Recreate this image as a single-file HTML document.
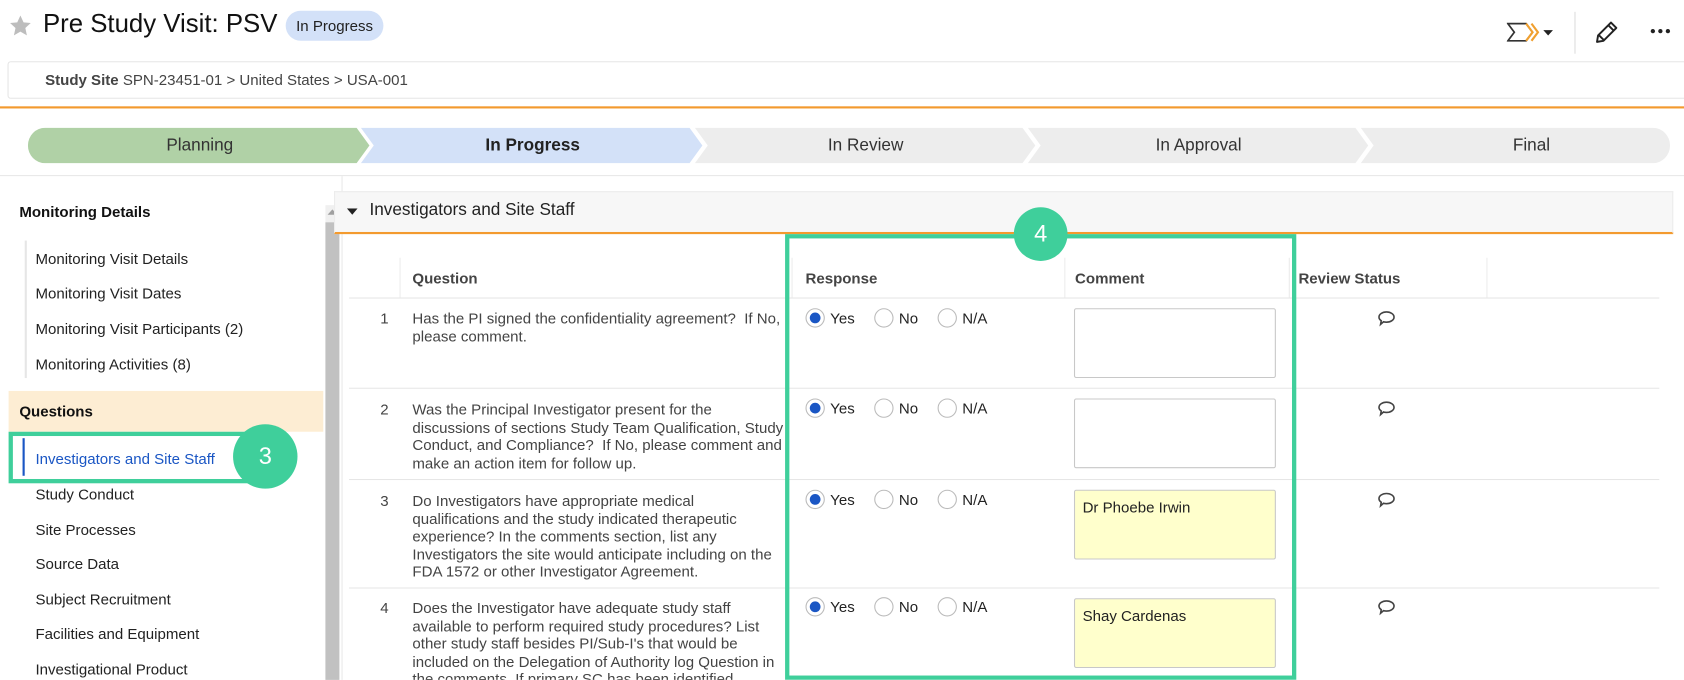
<!DOCTYPE html>
<html><head><meta charset="utf-8"><style>
*{box-sizing:border-box;margin:0;padding:0}
html,body{width:1684px;height:680px;overflow:hidden;background:#fff}
body{font-family:"Liberation Sans",Arial,sans-serif;color:#222;position:relative}
#w{position:absolute;left:0;top:0;width:1568px;height:633px;overflow:hidden;transform:scale(1.07398);transform-origin:0 0}
.a{position:absolute}
.nav{font-size:14px;color:#222}
.q{font-size:14px;color:#444;line-height:16.5px;white-space:nowrap}
.hd{font-size:14px;font-weight:bold;color:#444}
.rad{position:absolute;width:18px;height:18px;border:1px solid #bbb;border-radius:50%;background:#fff}
.rad.on::after{content:"";position:absolute;left:3px;top:3px;width:10px;height:10px;border-radius:50%;background:#1a56c4}
.rl{position:absolute;font-size:14px;color:#222}
.ta{position:absolute;left:1000px;width:188px;height:65px;border:1px solid #c8c8c8;border-radius:2px;font-size:14px;padding:7px 7px}
.row{position:absolute;left:325px;width:1220px;height:1px;background:#e6e6e6}
</style></head><body><div id="w">
<svg class="a" style="left:8px;top:13px" width="22" height="22" viewBox="0 0 24 24"><path d="M12 1.5l3.2 7 7.3.7-5.5 5 1.6 7.5L12 17.9 5.4 21.7 7 14.2 1.5 9.2l7.3-.7z" fill="#bdbdbd"/></svg>
<div class="a" style="left:40px;top:9px;font-size:24px;color:#111">Pre Study Visit: PSV</div>
<div class="a" style="left:266px;top:10px;width:91px;height:28px;border-radius:14px;background:#d3e1f8;font-size:14px;line-height:28px;text-align:center;color:#222">In Progress</div>
<svg class="a" style="left:1403px;top:20px" width="48" height="20" viewBox="0 0 48 20"><path d="M1 2h17l6 8-6 8H1l6-8z" fill="none" stroke="#333" stroke-width="1.6"/><path d="M18 2l6 8-6 8M23 2l6 8-6 8" fill="none" stroke="#f0a030" stroke-width="2"/><path d="M34 8h9l-4.5 5z" fill="#222"/></svg>
<div class="a" style="left:1466px;top:11px;width:1px;height:39px;background:#ddd"></div>
<svg class="a" style="left:1484px;top:18px" width="24" height="24" viewBox="0 0 24 24"><path d="M16 3l5 5L9 20l-6 1 1-6z M13.5 5.5l5 5 M5 15l4 4" fill="none" stroke="#222" stroke-width="1.8" stroke-linejoin="round"/></svg>
<svg class="a" style="left:1536px;top:26px" width="20" height="6"><circle cx="3" cy="3" r="2" fill="#222"/><circle cx="10" cy="3" r="2" fill="#222"/><circle cx="17" cy="3" r="2" fill="#222"/></svg>
<div class="a" style="left:7px;top:57px;width:1580px;height:35px;border:1px solid #e6e6e6;border-radius:3px"></div>
<div class="a" style="left:42px;top:66px;font-size:14px;color:#444"><b>Study Site</b> SPN-23451-01 &gt; United States &gt; USA-001</div>
<div class="a" style="left:0;top:99px;width:1684px;height:2px;background:#f39a2e"></div>
<svg class="a" style="left:26px;top:119px" width="1530" height="33" viewBox="0 0 1530 33">
<path d="M16 0H306l12 16.5L306 33H16A16 16.5 0 0 1 16 0z" fill="#b0d1a6"/>
<path d="M310 0H616l12 16.5L616 33H310l12-16.5z" fill="#d3e1f8"/>
<path d="M621 0H926l12 16.5L926 33H621l12-16.5z" fill="#ededed"/>
<path d="M931 0H1236l12 16.5L1236 33H931l12-16.5z" fill="#ededed"/>
<path d="M1241 0H1513a16 16.5 0 0 1 0 33H1241l12-16.5z" fill="#ededed"/>
</svg>
<div class="a" style="left:26px;top:127px;width:320px;text-align:center;font-size:16px;color:#333">Planning</div>
<div class="a" style="left:336px;top:127px;width:320px;text-align:center;font-size:16px;font-weight:bold;color:#222">In Progress</div>
<div class="a" style="left:646px;top:127px;width:320px;text-align:center;font-size:16px;color:#333">In Review</div>
<div class="a" style="left:956px;top:127px;width:320px;text-align:center;font-size:16px;color:#333">In Approval</div>
<div class="a" style="left:1266px;top:127px;width:320px;text-align:center;font-size:16px;color:#333">Final</div>
<div class="a" style="left:0;top:163px;width:1684px;height:1px;background:#e8e8e8"></div>
<div class="a" style="left:318px;top:164px;width:1px;height:516px;background:#e8e8e8"></div>
<div class="a" style="left:303px;top:191px;width:13px;height:489px;background:#f0f0f0"></div>
<div class="a" style="left:303px;top:207px;width:13px;height:473px;background:#c1c1c1"></div>
<svg class="a" style="left:305px;top:195px" width="9" height="6"><path d="M0 5L4.5 0 9 5z" fill="#a0a0a0"/></svg>
<div class="a" style="left:18px;top:189px;font-size:14px;font-weight:bold;color:#111">Monitoring Details</div>
<div class="a" style="left:23px;top:224px;width:2px;height:128px;background:#e6e6e6"></div>
<div class="a nav" style="left:33px;top:233px">Monitoring Visit Details</div>
<div class="a nav" style="left:33px;top:265px">Monitoring Visit Dates</div>
<div class="a nav" style="left:33px;top:298px">Monitoring Visit Participants (2)</div>
<div class="a nav" style="left:33px;top:331px">Monitoring Activities (8)</div>
<div class="a" style="left:8px;top:364px;width:293px;height:38px;background:#fdedd3"></div>
<div class="a" style="left:18px;top:375px;font-size:14px;font-weight:bold;color:#111">Questions</div>
<div class="a" style="left:8px;top:402px;width:254px;height:48px;border:4px solid #3fcf9b"></div>
<div class="a" style="left:21px;top:408px;width:2px;height:35px;background:#1a56c4"></div>
<div class="a nav" style="left:33px;top:419px;color:#1a56c4">Investigators and Site Staff</div>
<div class="a" style="left:217px;top:395px;width:60px;height:60px;border-radius:50%;background:#3fcf9b;color:#fff;font-size:22px;line-height:60px;text-align:center">3</div>
<div class="a nav" style="left:33px;top:452px">Study Conduct</div>
<div class="a nav" style="left:33px;top:485px">Site Processes</div>
<div class="a nav" style="left:33px;top:517px">Source Data</div>
<div class="a nav" style="left:33px;top:550px">Subject Recruitment</div>
<div class="a nav" style="left:33px;top:582px">Facilities and Equipment</div>
<div class="a nav" style="left:33px;top:615px">Investigational Product</div>
<div class="a" style="left:311px;top:178px;width:1247px;height:40px;background:#f7f7f7;border:1px solid #ececec;border-bottom:2px solid #f39a2e"></div>
<svg class="a" style="left:323px;top:194px" width="10" height="7"><path d="M0 0h10L5 6z" fill="#222"/></svg>
<div class="a" style="left:344px;top:187px;font-size:16px;color:#222">Investigators and Site Staff</div>
<div class="a" style="left:372px;top:240px;width:1px;height:37px;background:#ececec"></div>
<div class="a" style="left:737px;top:240px;width:1px;height:37px;background:#ececec"></div>
<div class="a" style="left:991px;top:240px;width:1px;height:37px;background:#ececec"></div>
<div class="a" style="left:1200px;top:240px;width:1px;height:37px;background:#ececec"></div>
<div class="a" style="left:1384px;top:240px;width:1px;height:37px;background:#ececec"></div>
<div class="a hd" style="left:384px;top:251px">Question</div>
<div class="a hd" style="left:750px;top:251px">Response</div>
<div class="a hd" style="left:1001px;top:251px">Comment</div>
<div class="a hd" style="left:1209px;top:251px">Review Status</div>
<div class="row" style="top:277px"></div>
<div class="row" style="top:361px"></div>
<div class="row" style="top:446px"></div>
<div class="row" style="top:547px"></div>
<div class="a q" style="left:354px;top:288px">1</div>
<div class="a q" style="left:384px;top:288px">Has the PI signed the confidentiality agreement?&nbsp; If No,<br>please comment.</div>
<div class="a q" style="left:354px;top:373px">2</div>
<div class="a q" style="left:384px;top:373px">Was the Principal Investigator present for the<br>discussions of sections Study Team Qualification, Study<br>Conduct, and Compliance?&nbsp; If No, please comment and<br>make an action item for follow up.</div>
<div class="a q" style="left:354px;top:458px">3</div>
<div class="a q" style="left:384px;top:458px">Do Investigators have appropriate medical<br>qualifications and the study indicated therapeutic<br>experience? In the comments section, list any<br>Investigators the site would anticipate including on the<br>FDA 1572 or other Investigator Agreement.</div>
<div class="a q" style="left:354px;top:558px">4</div>
<div class="a q" style="left:384px;top:558px">Does the Investigator have adequate study staff<br>available to perform required study procedures? List<br>other study staff besides PI/Sub-I's that would be<br>included on the Delegation of Authority log Question in<br>the comments. If primary SC has been identified</div>
<div class="rad on" style="left:750px;top:287px"></div><div class="rl" style="left:773px;top:288px">Yes</div>
<div class="rad" style="left:814px;top:287px"></div><div class="rl" style="left:837px;top:288px">No</div>
<div class="rad" style="left:873px;top:287px"></div><div class="rl" style="left:896px;top:288px">N/A</div>
<div class="rad on" style="left:750px;top:371px"></div><div class="rl" style="left:773px;top:372px">Yes</div>
<div class="rad" style="left:814px;top:371px"></div><div class="rl" style="left:837px;top:372px">No</div>
<div class="rad" style="left:873px;top:371px"></div><div class="rl" style="left:896px;top:372px">N/A</div>
<div class="rad on" style="left:750px;top:456px"></div><div class="rl" style="left:773px;top:457px">Yes</div>
<div class="rad" style="left:814px;top:456px"></div><div class="rl" style="left:837px;top:457px">No</div>
<div class="rad" style="left:873px;top:456px"></div><div class="rl" style="left:896px;top:457px">N/A</div>
<div class="rad on" style="left:750px;top:556px"></div><div class="rl" style="left:773px;top:557px">Yes</div>
<div class="rad" style="left:814px;top:556px"></div><div class="rl" style="left:837px;top:557px">No</div>
<div class="rad" style="left:873px;top:556px"></div><div class="rl" style="left:896px;top:557px">N/A</div>
<div class="ta" style="top:287px"></div>
<div class="ta" style="top:371px"></div>
<div class="ta" style="top:456px;background:#ffffcc">Dr Phoebe Irwin</div>
<div class="ta" style="top:557px;background:#ffffcc">Shay Cardenas</div>
<svg class="a" style="left:1282px;top:289px" width="18" height="15" viewBox="0 0 18 15"><path d="M9 1.5c4 0 7 2.2 7 4.8S13 11 9 11c-1 0-2-.1-2.8-.4L3.5 13l.6-3.3C2.8 8.8 2 7.6 2 6.3 2 3.7 5 1.5 9 1.5z" fill="none" stroke="#444" stroke-width="1.5"/></svg>
<svg class="a" style="left:1282px;top:373px" width="18" height="15" viewBox="0 0 18 15"><path d="M9 1.5c4 0 7 2.2 7 4.8S13 11 9 11c-1 0-2-.1-2.8-.4L3.5 13l.6-3.3C2.8 8.8 2 7.6 2 6.3 2 3.7 5 1.5 9 1.5z" fill="none" stroke="#444" stroke-width="1.5"/></svg>
<svg class="a" style="left:1282px;top:458px" width="18" height="15" viewBox="0 0 18 15"><path d="M9 1.5c4 0 7 2.2 7 4.8S13 11 9 11c-1 0-2-.1-2.8-.4L3.5 13l.6-3.3C2.8 8.8 2 7.6 2 6.3 2 3.7 5 1.5 9 1.5z" fill="none" stroke="#444" stroke-width="1.5"/></svg>
<svg class="a" style="left:1282px;top:558px" width="18" height="15" viewBox="0 0 18 15"><path d="M9 1.5c4 0 7 2.2 7 4.8S13 11 9 11c-1 0-2-.1-2.8-.4L3.5 13l.6-3.3C2.8 8.8 2 7.6 2 6.3 2 3.7 5 1.5 9 1.5z" fill="none" stroke="#444" stroke-width="1.5"/></svg>
<div class="a" style="left:731px;top:218px;width:476px;height:415px;border:4px solid #3fcf9b"></div>
<div class="a" style="left:944px;top:193px;width:50px;height:50px;border-radius:50%;background:#3fcf9b;color:#fff;font-size:22px;line-height:50px;text-align:center">4</div>
</div></body></html>
